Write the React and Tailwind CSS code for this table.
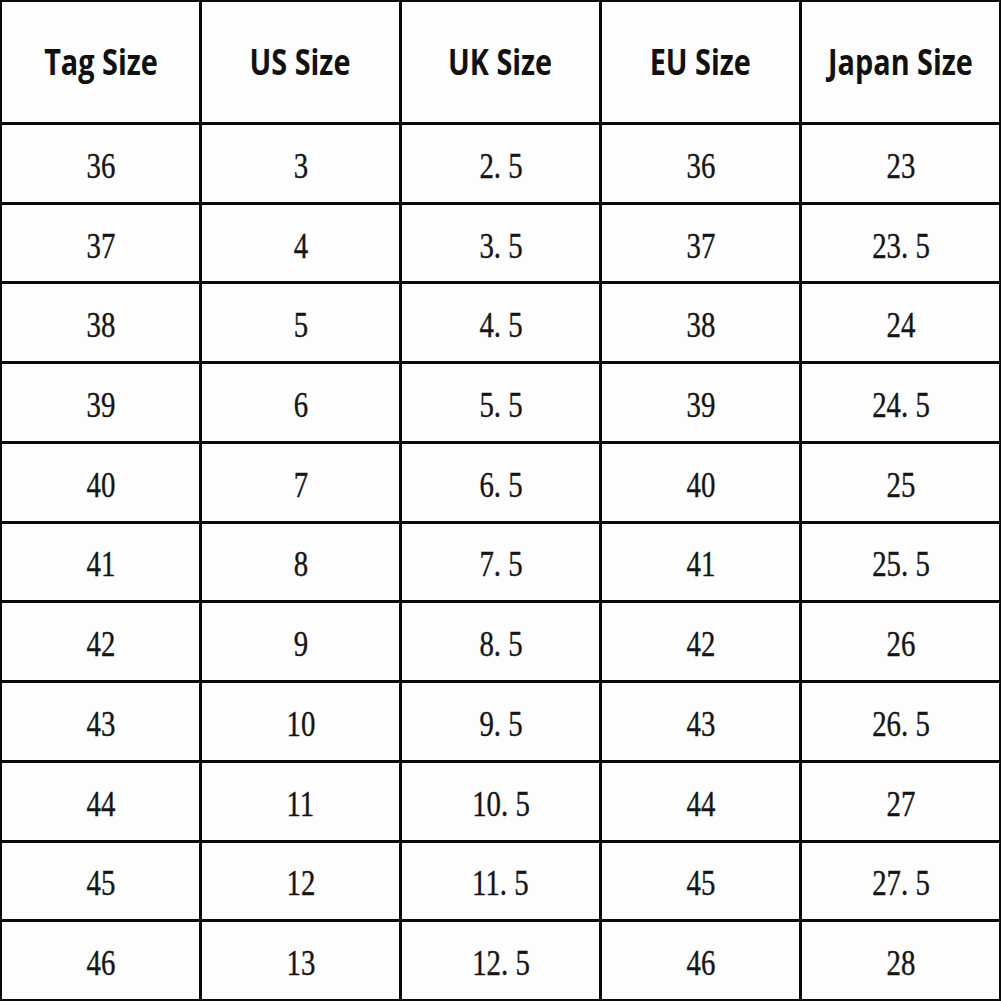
const headers = ['Tag Size', 'US Size', 'UK Size', 'EU Size', 'Japan Size']

const rows = [
  ['36', '3', '2.5', '36', '23'],
  ['37', '4', '3.5', '37', '23.5'],
  ['38', '5', '4.5', '38', '24'],
  ['39', '6', '5.5', '39', '24.5'],
  ['40', '7', '6.5', '40', '25'],
  ['41', '8', '7.5', '41', '25.5'],
  ['42', '9', '8.5', '42', '26'],
  ['43', '10', '9.5', '43', '26.5'],
  ['44', '11', '10.5', '44', '27'],
  ['45', '12', '11.5', '45', '27.5'],
  ['46', '13', '12.5', '46', '28'],
]

// the period in the numbers sits in a wide cell, like a CJK serif font
function Num({ value }) {
  const [whole, frac] = value.split('.')
  return (
    <span className="inline-block scale-x-[0.8] font-['Liberation_Serif',serif] text-[36px] leading-none [-webkit-text-stroke:0.4px_#151515]">
      {whole}
      {frac !== undefined && (
        <>
          <span className="mr-[9px]">.</span>
          {frac}
        </>
      )}
    </span>
  )
}

export default function App() {
  return (
    <main className="w-[1001px] h-[1001px] bg-[#0a0a0a] p-[2px]">
      <div className="grid h-full grid-cols-5 grid-rows-[120px_repeat(11,1fr)] gap-[3px]">

        {/* HEADER */}

        {headers.map((h) => (
          <div key={h} className="bg-[#fdfdfd] flex items-center justify-center">
            <span className="inline-block scale-x-[0.8] font-['Open_Sans',sans-serif] font-bold text-[36px] leading-none text-[#111] whitespace-nowrap">
              {h}
            </span>
          </div>
        ))}

        {/* ROWS */}

        {rows.map((row, i) =>
          row.map((cell, j) => (
            <div
              key={`${i}-${j}`}
              className="bg-[#fdfdfd] flex items-center justify-center pt-[5px] text-[#151515]"
            >
              <Num value={cell} />
            </div>
          ))
        )}

      </div>
    </main>
  )
}
